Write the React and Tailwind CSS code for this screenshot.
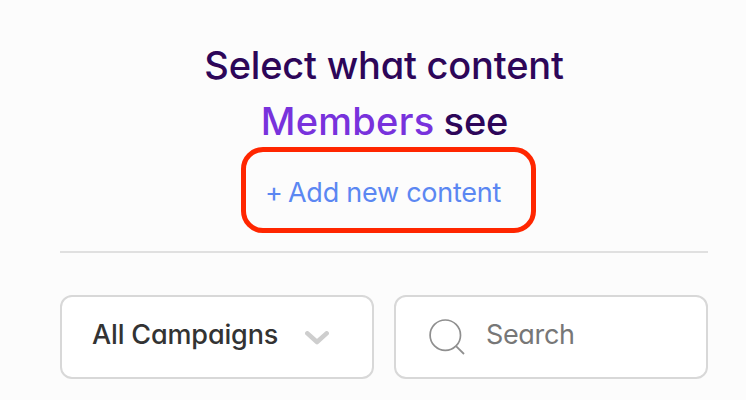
function ChevronIcon() {
  return (
    <svg width="24" height="14" viewBox="0 0 24 14" fill="none" className="mt-[2px] shrink-0">
      <path d="M2.4 2.4L12 11L21.6 2.4" stroke="#cecece" strokeWidth="4.6" strokeLinecap="round" strokeLinejoin="round" />
    </svg>
  )
}

function SearchIcon() {
  return (
    <svg width="36" height="36" viewBox="0 0 36 36" fill="none" className="shrink-0">
      <circle cx="16.3" cy="16.2" r="15.2" stroke="#8f8f8f" strokeWidth="1.7" />
      <path d="M27 27.2L35 35" stroke="#8f8f8f" strokeWidth="1.8" />
    </svg>
  )
}

export default function App() {
  return (
    <main className="h-[400px] w-[746px] overflow-hidden bg-[#fcfcfc] pl-[60px] pr-[38px] pt-[37px] font-['Inter','Lato',sans-serif] [font-feature-settings:'cv11']">
      <h1 className="text-center text-[38px] font-medium leading-[56px] text-[#2d0659]">
        <span className="block whitespace-nowrap tracking-[-0.2px]">Select what content</span>
        <span className="block whitespace-nowrap pl-px tracking-[-0.1px] [word-spacing:-1px]">
          <span className="tracking-[0.3px] text-[#7832dc]">Members</span> see
        </span>
      </h1>

      <div className="mt-[-2px] flex pl-[181px]">
        <button
          type="button"
          className="h-[86px] w-[295px] whitespace-nowrap rounded-[22px] border-[5px] border-[#ff2600] pl-[19px] pt-[7px] text-left text-[27px] tracking-[-0.25px] text-[#5b87f2]"
        >
          <span className="[word-spacing:-2px]">+ </span>Add new content
        </button>
      </div>

      <hr className="mt-[18px] border-t-2 border-[#e0e0e0]" />

      <div className="mt-[42px] grid grid-cols-2 gap-5">
        <button
          type="button"
          className="flex h-[84px] items-center rounded-xl border-2 border-[#d8d8d8] bg-white pl-[30px]"
        >
          <span className="w-[213px] whitespace-nowrap pb-[3px] text-left text-[27px] font-medium tracking-[-0.15px] text-[#333333]">
            All Campaigns
          </span>
          <ChevronIcon />
        </button>
        <label className="flex h-[84px] items-center rounded-xl border-2 border-[#d8d8d8] bg-white pl-[33px]">
          <SearchIcon />
          <span className="pb-[3px] pl-[21px] text-[27px] tracking-[-0.35px] text-[#777777]">Search</span>
        </label>
      </div>
    </main>
  )
}
